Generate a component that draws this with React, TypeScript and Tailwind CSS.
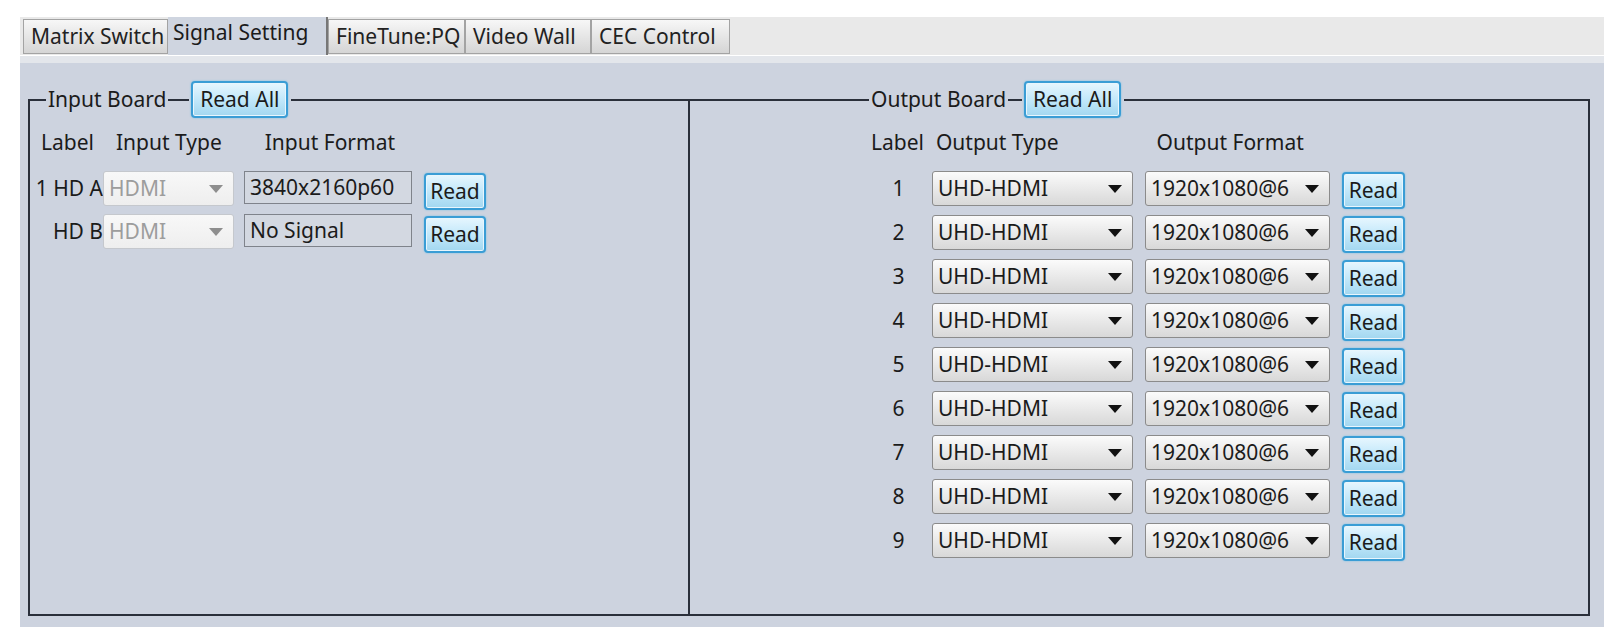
import clsx from "clsx";

const tabs = [
	{ label: "Matrix Switch", width: "w-[145px]", active: false },
	{ label: "Signal Setting", width: "w-[160px]", active: true },
	{ label: "FineTune:PQ", width: "w-[137px]", active: false },
	{ label: "Video Wall", width: "w-[126px]", active: false },
	{ label: "CEC Control", width: "w-[139px]", active: false },
];

const inputRows = [
	{ label: "1 HD A", format: "3840x2160p60" },
	{ label: "HD B", format: "No Signal" },
];

const outputRows = [1, 2, 3, 4, 5, 6, 7, 8, 9];

function Arrow({ disabled }: { disabled?: boolean }) {
	return (
		<svg width="14" height="8" viewBox="0 0 14 8" className="shrink-0">
			<polygon points="0,0 14,0 7,8" fill={disabled ? "#8e8e8e" : "#111"} />
		</svg>
	);
}

function Combo({
	text,
	width,
	disabled,
}: {
	text: string;
	width: string;
	disabled?: boolean;
}) {
	return (
		<div
			className={clsx(
				"flex h-[35px] shrink-0 items-center justify-between rounded-[3px] border pl-[5px] pr-[10px]",
				disabled
					? "border-[#c5c8cd] bg-linear-to-b from-[#f8f8f8] to-[#eeeeee] text-[#9d9d9d]"
					: "border-[#8b8b8b] bg-linear-to-b from-[#fbfbfb] to-[#d8d8d8] text-[#1b1b1b]",
				width,
			)}
		>
			<span className="whitespace-nowrap">{text}</span>
			<Arrow disabled={disabled} />
		</div>
	);
}

function ReadButton({ label, width }: { label: string; width: string }) {
	return (
		<button
			className={clsx(
				"flex h-[37px] shrink-0 items-center justify-center rounded-[4px] border-2 border-[#3a9dd5] bg-linear-to-b from-[#e6f6fe] via-[#c2e8fa] to-[#a2d7f0] text-[#1b1b1b] shadow-[inset_0_0_0_1px_#e8f6fd,0_0_2px_#6fc0e8]",
				width,
			)}
		>
			{label}
		</button>
	);
}

function Legend({ title, line }: { title: string; line: string }) {
	return (
		<div className="flex h-[37px] items-center pl-[2px] pr-[3px]">
			<span className="text-[#1b1b1b]">{title}</span>
			<span className={clsx("mx-[2px] h-[2px] bg-[#2a2f3a]", line)} />
			<ReadButton label="Read All" width="w-[97px]" />
		</div>
	);
}

export default function App() {
	return (
		<div className="min-h-screen bg-white pl-[20px] pt-[17px] font-['Noto_Sans','Liberation_Sans',sans-serif] text-[21px] text-[#1b1b1b]">
			<div className="w-[1584px]">
				{/* tab bar */}
				<div className="flex h-[38px] items-end bg-[#e9e9e9] pl-[3px]">
					{tabs.map((t) =>
						t.active ? (
							<div
								key={t.label}
								className={clsx(
									"h-[38px] whitespace-nowrap border-r-2 border-[#777] bg-[#cfd5e0] pl-[5px] leading-[30px]",
									t.width,
								)}
							>
								{t.label}
							</div>
						) : (
							<div
								key={t.label}
								className={clsx(
									"mb-[1px] h-[35px] whitespace-nowrap border border-[#a3a3a3] bg-linear-to-b from-[#f7f7f7] to-[#d5d5d5] pl-[7px] leading-[33px] text-[#222]",
									t.width,
								)}
							>
								{t.label}
							</div>
						),
					)}
				</div>
				<div className="h-[8px] border-t border-white bg-[#e3e6eb]" />

				{/* panel */}
				<div className="flex h-[564px] bg-[#cdd3df] pb-[11px] pl-[8px] pr-[14px] pt-[18px]">
					<fieldset className="w-[662px] border-2 border-[#2a2f3a] p-0">
						<legend className="ml-[16px] p-0">
							<Legend title="Input Board" line="w-[21px]" />
						</legend>
						<div className="mt-[12px] flex h-[26px] items-center">
							<span className="pl-[11px]">Label</span>
							<span className="pl-[22px]">Input Type</span>
							<span className="pl-[43px]">Input Format</span>
						</div>
						<div className="mt-[15px] flex flex-col gap-[8px]">
							{inputRows.map((r) => (
								<div key={r.label} className="flex h-[35px] items-start">
									<div className="flex h-[35px] w-[73px] shrink-0 items-center justify-end whitespace-nowrap">
										{r.label}
									</div>
									<Combo text="HDMI" width="w-[131px]" disabled />
									<div className="ml-[10px] flex h-[33px] w-[168px] shrink-0 items-center border border-[#7f838b] bg-[#d3d8e1] pl-[5px]">
										{r.format}
									</div>
									<div className="ml-[12px] mt-[2px]">
										<ReadButton label="Read" width="w-[62px]" />
									</div>
								</div>
							))}
						</div>
					</fieldset>

					<fieldset className="flex-1 border-2 border-l-0 border-[#2a2f3a] p-0">
						<legend className="ml-[179px] p-0">
							<Legend title="Output Board" line="w-[14px]" />
						</legend>
						<div className="mt-[12px] flex h-[26px] items-center pl-[181px]">
							<span>Label</span>
							<span className="pl-[12px]">Output Type</span>
							<span className="pl-[98px]">Output Format</span>
						</div>
						<div className="mt-[15px] flex flex-col gap-[9px] pl-[181px]">
							{outputRows.map((n) => (
								<div key={n} className="flex h-[35px] items-start">
									<div className="flex h-[35px] w-[55px] shrink-0 items-center justify-center">
										{n}
									</div>
									<div className="ml-[6px] flex items-start">
										<Combo text="UHD-HDMI" width="w-[201px]" />
										<div className="ml-[12px]">
											<Combo text="1920x1080@6" width="w-[185px]" />
										</div>
										<div className="ml-[12px] mt-[1px]">
											<ReadButton label="Read" width="w-[63px]" />
										</div>
									</div>
								</div>
							))}
						</div>
					</fieldset>
				</div>
			</div>
		</div>
	);
}
